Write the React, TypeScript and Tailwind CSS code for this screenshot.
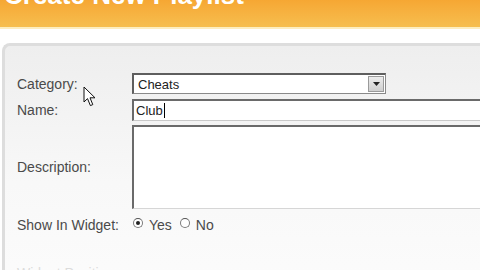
import React from "react";

const labelCls = "text-[14px] leading-none text-[#4a4a4a]";

function Radio({ checked }: { checked?: boolean }) {
  return (
    <span className="flex h-[10px] w-[10px] items-center justify-center rounded-full border border-[#7b7b7b] border-t-[#555] bg-white">
      {checked ? <span className="h-[4px] w-[4px] rounded-full bg-[#222]" /> : null}
    </span>
  );
}

function Cursor() {
  return (
    <svg
      className="absolute left-[83px] top-[86px]"
      width="14"
      height="22"
      viewBox="0 0 14 22"
      aria-hidden
    >
      <path
        d="M1 1 L1 16 L4.5 12.6 L7.4 19.6 L9.8 18.6 L7 11.8 L12 11.8 Z"
        fill="#fff"
        stroke="#111"
        strokeWidth="1"
        strokeLinejoin="round"
      />
    </svg>
  );
}

export default function App() {
  return (
    <div className="relative h-[270px] w-[480px] overflow-hidden bg-white font-['Liberation_Sans',Arial,sans-serif]">
      <header className="h-[29px] overflow-hidden border-b-2 border-[#fdeebf] bg-gradient-to-b from-[#f6a733] to-[#f6be4e] px-[4px]">
        <h1 className="-mt-[18px] whitespace-nowrap text-[26px] font-bold leading-none text-white">
          Create New Playlist
        </h1>
      </header>

      <div className="pl-[2px] pt-[14px]">
        <div className="w-[540px] rounded-tl-[8px] border-l-[3px] border-t-[3px] border-[#dddddd] bg-gradient-to-b from-[#eeeeee] via-[#f8f8f8] to-[#fdfdfd] pl-[12px] pt-[27px]">
          <div className="grid grid-cols-[115px_1fr] items-center">
            <span className={labelCls}>Category:</span>
            <div className="flex h-[21px] w-[254px] items-center border border-[#8a8a8a] border-l-2 border-t-2 border-l-[#5e5e5e] border-t-[#5e5e5e] bg-white pl-[4px] pr-[1px]">
              <span className="flex-1 text-[13px] leading-none text-[#222]">Cheats</span>
              <span className="flex h-[16px] w-[16px] items-center justify-center border border-[#9a9a9a] bg-gradient-to-b from-[#ececec] to-[#cfcfcf]">
                <svg width="7" height="4" viewBox="0 0 7 4" aria-hidden>
                  <path d="M0 0 H7 L3.5 4 Z" fill="#222" />
                </svg>
              </span>
            </div>

            <span className={`${labelCls} mt-[5px]`}>Name:</span>
            <div className="mt-[5px] flex h-[22px] w-[360px] items-center border border-[#c9c9c9] border-l-2 border-t-2 border-l-[#6a6a6a] border-t-[#6a6a6a] bg-white pl-[2px]">
              <span className="text-[13px] leading-none text-[#222]">Club</span>
              <span className="ml-[1px] h-[15px] w-px bg-black" />
            </div>

            <span className={`${labelCls} mt-[4px]`}>Description:</span>
            <div className="mt-[4px] h-[84px] w-[360px] border border-[#d6d6d6] border-l-2 border-t-2 border-l-[#6a6a6a] border-t-[#6a6a6a] bg-white" />

            <span className={`${labelCls} mt-[8px]`}>Show In Widget:</span>
            <div className="mt-[8px] flex h-[16px] items-center gap-[6px] pl-[1px] text-[14px] leading-none text-[#4a4a4a]">
              <span className="-mt-[4px]">
                <Radio checked />
              </span>
              <span>Yes</span>
              <span className="-mt-[4px] ml-[2px]">
                <Radio />
              </span>
              <span>No</span>
            </div>

            <span className={`${labelCls} mt-[33px] text-[#dcdcdc]`}>Widget Position:</span>
            <span className="mt-[33px]" />
          </div>
          <div className="h-[40px]" />
        </div>
      </div>

      <Cursor />
    </div>
  );
}
